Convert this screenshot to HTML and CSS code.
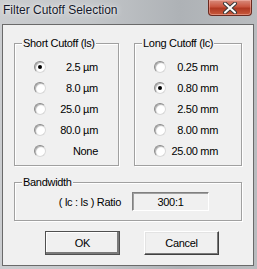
FILE: index.html
```html
<!DOCTYPE html>
<html lang="en">
<head>
    <meta charset="UTF-8">
    <title>Filter Cutoff Selection</title>
    <link rel="stylesheet" href="styles.css">
</head>
<body>
    <div class="window">
        <div class="titlebar">
            <span class="title">Filter Cutoff Selection</span>
            <button class="close" title="Close">
                <svg width="16" height="12" viewBox="0 0 16 12">
                    <path d="M3 1.5 L13 10.5 M13 1.5 L3 10.5" stroke="#3a3a3a" stroke-width="4" stroke-linecap="round"/>
                    <path d="M3 1.5 L13 10.5 M13 1.5 L3 10.5" stroke="#ffffff" stroke-width="2" stroke-linecap="round"/>
                </svg>
            </button>
        </div>

        <div class="client">
            <div class="cutoffs">
                <div class="group short">
                    <div class="group-title">Short Cutoff (ls)</div>
                    <div class="options">
                        <label class="option"><span class="radio checked"></span><span class="value">2.5 µm</span></label>
                        <label class="option"><span class="radio"></span><span class="value">8.0 µm</span></label>
                        <label class="option"><span class="radio"></span><span class="value">25.0 µm</span></label>
                        <label class="option"><span class="radio"></span><span class="value">80.0 µm</span></label>
                        <label class="option"><span class="radio"></span><span class="value">None</span></label>
                    </div>
                </div>

                <div class="group long">
                    <div class="group-title">Long Cutoff (lc)</div>
                    <div class="options">
                        <label class="option"><span class="radio"></span><span class="value">0.25 mm</span></label>
                        <label class="option"><span class="radio checked"></span><span class="value">0.80 mm</span></label>
                        <label class="option"><span class="radio"></span><span class="value">2.50 mm</span></label>
                        <label class="option"><span class="radio"></span><span class="value">8.00 mm</span></label>
                        <label class="option"><span class="radio"></span><span class="value">25.00 mm</span></label>
                    </div>
                </div>
            </div>

            <div class="group bandwidth">
                <div class="group-title">Bandwidth</div>
                <div class="ratio-row">
                    <span class="ratio-label">( lc : ls ) Ratio</span>
                    <span class="ratio-box">300:1</span>
                </div>
            </div>

            <div class="actions">
                <button class="btn default">OK</button>
                <button class="btn">Cancel</button>
            </div>
        </div>
    </div>
</body>
</html>
```
FILE: styles.css
```css
:root {
    --face: #f0f0f0;
    --group-line: #a0a0a0;
    --frame-dark: #6a6a6a;
    --text: #000000;
}

* {
    box-sizing: border-box;
}

body {
    margin: 0;
    font-family: 'Liberation Sans', Arial, sans-serif;
    font-size: 11px;
    letter-spacing: -0.3px;
    color: var(--text);
}

.window {
    width: 257px;
    height: 269px;
    display: flex;
    flex-direction: column;
    background: linear-gradient(to right, #cbcdd0 0%, #c3c6c9 35%, #aeb2b6 70%, #b9bcbf 100%);
}

.titlebar {
    height: 24px;
    display: flex;
    justify-content: space-between;
    align-items: flex-start;
    padding-left: 3px;
}

.title {
    margin-top: 3px;
    font-size: 12px;
    line-height: 15px;
    letter-spacing: 0;
    color: #14182a;
    text-shadow: 0 0 6px rgba(255, 255, 255, 0.9), 0 0 2px rgba(255, 255, 255, 0.8);
}

.close {
    width: 44px;
    height: 16px;
    margin-right: 5px;
    padding: 0;
    border: 1px solid #6b2a20;
    border-top: none;
    border-radius: 0 0 4px 4px;
    background: linear-gradient(to bottom, #d98b7c 0%, #c9553f 45%, #b03822 55%, #c85a3c 100%);
    box-shadow: inset 0 0 0 1px rgba(255, 200, 190, 0.45);
    display: flex;
    justify-content: center;
    align-items: center;
}

.client {
    flex: 1;
    margin: 0 3px 3px 2px;
    border: 1px solid var(--frame-dark);
    background: var(--face);
    padding: 18px 11px 0 11px;
}

.cutoffs {
    display: flex;
    gap: 15px;
}

.group {
    border: 1px solid var(--group-line);
    box-shadow: 1px 1px 0 #ffffff, inset 1px 1px 0 #ffffff;
}

.group-title {
    width: fit-content;
    margin: -7px 0 0 7px;
    padding: 0 1px;
    line-height: 13px;
    background: var(--face);
}

.short {
    width: 105px;
    height: 123px;
}

.long {
    width: 108px;
    height: 123px;
}

.options {
    padding-top: 6px;
    display: flex;
    flex-direction: column;
}

.option {
    height: 21px;
    display: flex;
    align-items: center;
    padding-left: 19px;
}

.radio {
    flex: none;
    width: 12px;
    height: 12px;
    border-radius: 50%;
    border: 1px solid;
    border-color: #8a8a8a #d8d8d8 #d8d8d8 #8a8a8a;
    background: #ffffff;
    box-shadow: inset 1px 1px 1px #b0b0b0;
    display: flex;
    justify-content: center;
    align-items: center;
}

.radio.checked::after {
    content: "";
    width: 4px;
    height: 4px;
    border-radius: 50%;
    background: #000000;
}

.value {
    width: 52px;
    text-align: right;
}

.bandwidth {
    margin-top: 16px;
    height: 39px;
}

.ratio-row {
    margin-top: 3px;
    display: flex;
    align-items: center;
    gap: 11px;
}

.ratio-label {
    width: 106px;
    text-align: right;
}

.ratio-box {
    width: 77px;
    height: 19px;
    border: 1px solid;
    border-color: #808080 #ffffff #ffffff #808080;
    box-shadow: inset 1px 1px 0 #a0a0a0;
    display: flex;
    justify-content: center;
    align-items: center;
}

.actions {
    margin-top: 10px;
    padding-left: 31px;
    display: flex;
    gap: 24px;
}

.btn {
    width: 75px;
    height: 24px;
    padding: 0;
    font-family: inherit;
    font-size: 11px;
    letter-spacing: inherit;
    color: var(--text);
    background: var(--face);
    border: 1px solid;
    border-color: #ffffff #404040 #404040 #ffffff;
    box-shadow: inset -1px -1px 0 #7a7a7a, inset 1px 1px 0 #e3e3e3;
}

.btn.default {
    border-color: #505050;
    box-shadow: inset -2px -2px 0 #7a7a7a, inset 1px 1px 0 #ffffff;
}
```
